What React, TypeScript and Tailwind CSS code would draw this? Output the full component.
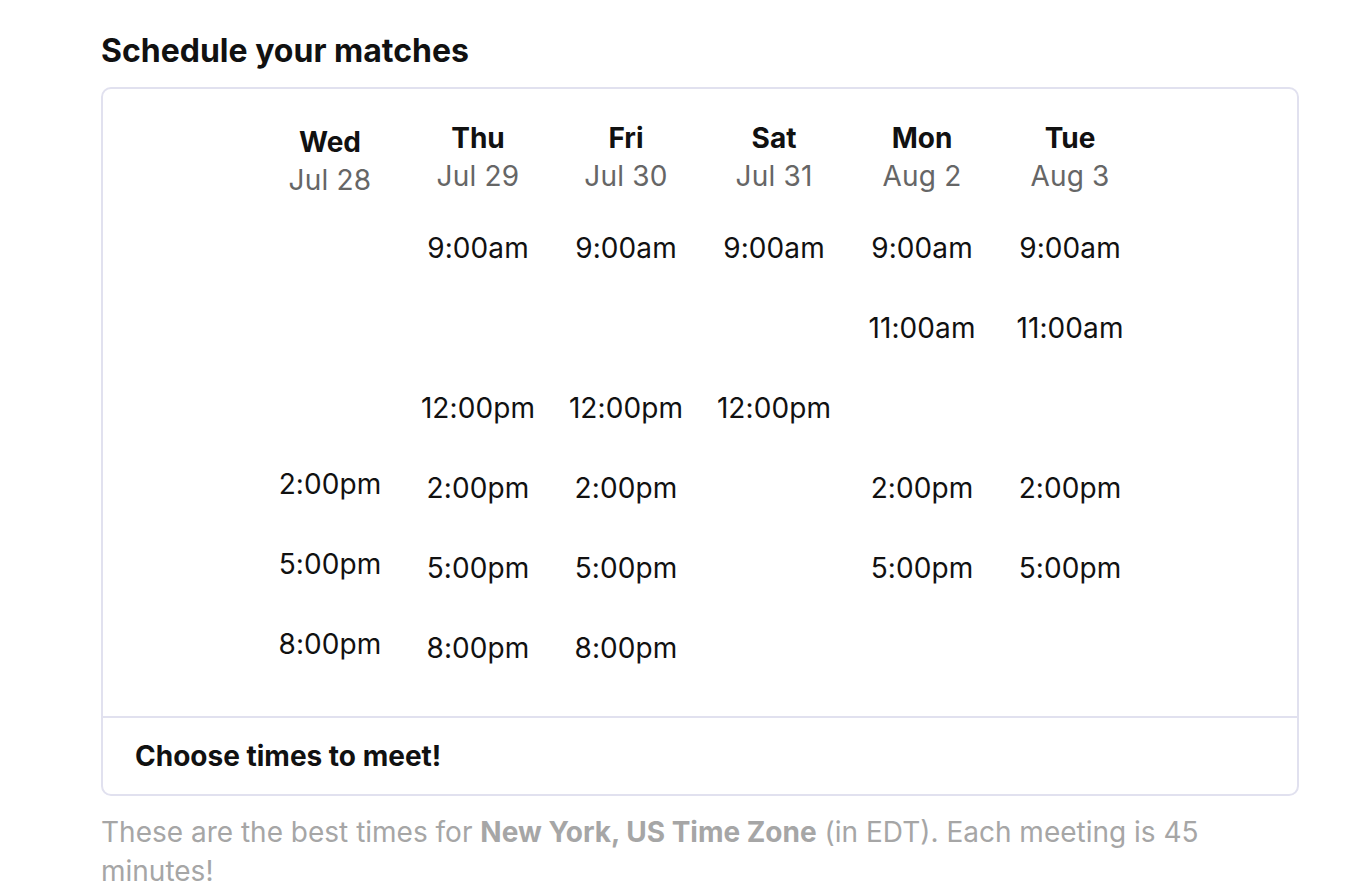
import React from "react";

type Col = { day: string; date: string; slots: (string | null)[]; wed?: boolean };

const cols: Col[] = [
  { day: "Wed", date: "Jul 28", slots: [null, null, null, "2:00pm", "5:00pm", "8:00pm"], wed: true },
  { day: "Thu", date: "Jul 29", slots: ["9:00am", null, "12:00pm", "2:00pm", "5:00pm", "8:00pm"] },
  { day: "Fri", date: "Jul 30", slots: ["9:00am", null, "12:00pm", "2:00pm", "5:00pm", "8:00pm"] },
  { day: "Sat", date: "Jul 31", slots: ["9:00am", null, "12:00pm", null, null, null] },
  { day: "Mon", date: "Aug 2", slots: ["9:00am", "11:00am", null, "2:00pm", "5:00pm", null] },
  { day: "Tue", date: "Aug 3", slots: ["9:00am", "11:00am", null, "2:00pm", "5:00pm", null] },
];

export default function App() {
  return (
    <div
      className="min-h-[886px] bg-white text-[#111111]"
      style={{ fontFamily: "Inter, 'Noto Sans', sans-serif" }}
    >
      <div className="ml-[101px] w-[1198px] pt-[30px]">
        <h1 className="text-[32px] font-bold leading-[42px]">Schedule your matches</h1>
        <div className="mt-[15px] rounded-[10px] border-[2px] border-[#e1e1ef]">
          <div className="flex pl-[153px] pt-[30px] pb-[28px]">
            {cols.map((c) => (
              <div key={c.day} className="flex w-[148px] flex-col items-center">
                <div className={c.wed ? "pt-[4px] text-center" : "text-center"}>
                  <div className="text-[28px] font-bold leading-[38px]">{c.day}</div>
                  <div className="text-[28px] leading-[38px] tracking-[0.2px] text-[#666666]">{c.date}</div>
                </div>
                <div className={c.wed ? "mt-[5px] flex flex-col" : "mt-[13px] flex flex-col"}>
                  {c.slots.map((s, i) => (
                    <div key={i} className="flex h-[80px] items-center justify-center text-[28px] tracking-[0.1px]">
                      {s}
                    </div>
                  ))}
                </div>
              </div>
            ))}
          </div>
          <div className="flex h-[78px] items-center border-t-[2px] border-[#e1e1ef] px-[32px]">
            <span className="text-[28px] font-bold">Choose times to meet!</span>
          </div>
        </div>
        <p className="mt-[17px] text-[28px] leading-[39px] text-[#a6a6a6]">
          These are the best times for <b className="font-bold">New York, US Time Zone</b> (in EDT). Each meeting is 45
          minutes!
        </p>
      </div>
    </div>
  );
}
